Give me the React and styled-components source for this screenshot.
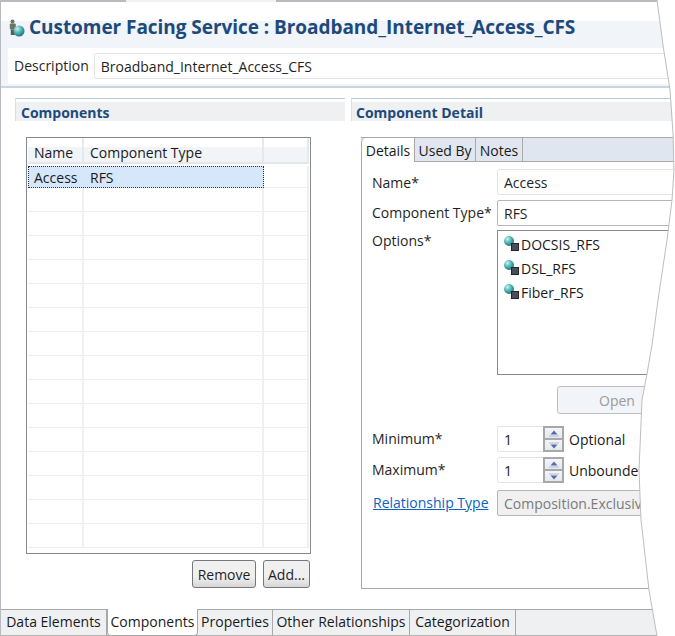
import React from "react";
import styled, { createGlobalStyle } from "styled-components";

const Global = createGlobalStyle`
  html, body { margin: 0; padding: 0; background: #fff; }
  body { font-family: "Open Sans", "Noto Sans", sans-serif; font-size: 14px; color: #1a1a1a; }
`;

const Page = styled.div`
  position: relative; width: 675px; height: 636px; overflow: hidden; background: #fff;
  box-sizing: border-box; border-left: 1px solid #b9b9c0; display: flex; flex-direction: column;
`;
const TopEdge = styled.div`
  height: 2px; flex: none;
  background: linear-gradient(to right, #b9b9c0 125px, #f2f2f4 125px, #f2f2f4 275px, #b9b9c0 275px);
`;
const TitleArea = styled.div`
  height: 46px; flex: none; box-sizing: border-box; padding-top: 11px; background: linear-gradient(#fff 19px, #f1f4f8 19px);
`;
const Title = styled.h1`
  margin: 0; height: 27px; display: flex; align-items: center; padding-left: 8px;
  font-size: 19px; font-weight: 700; color: #1c4a7c; white-space: nowrap; letter-spacing: -0.05px;
`;
const DescBand = styled.div`
  height: 40px; flex: none; box-sizing: border-box; padding-left: 7px; background: #f1f4f8; border-bottom: 2px solid #c9d5e2;
  display: flex;
`;
const DescRow = styled.div`
  flex: 1; height: 36px; background: #fff; display: flex; align-items: center; gap: 5px; padding-left: 6px;
`;
const Label = styled.span`
  white-space: nowrap; color: #1f1f1f; line-height: 20px;
`;
const Field = styled.div`
  box-sizing: border-box; height: ${p => p.$h || 26}px; flex: 1; display: flex; align-items: center; padding-left: 6px;
  border: 1px solid ${p => p.$strong ? "#b5b5b5" : "#e4e4e4"}; border-radius: 2px; background: ${p => p.$disabled ? "#f0f0f0" : "#fff"};
  color: ${p => p.$disabled ? "#7a7a7a" : "#1f1f1f"}; white-space: nowrap; overflow: hidden;
`;
const Panels = styled.div`
  flex: 1; display: flex; gap: 6px; padding: 10px 0 0 14px; min-height: 0;
`;
const LeftPanel = styled.section`
  width: 330px; flex: none; display: flex; flex-direction: column;
`;
const RightPanel = styled.section`
  flex: 1; min-width: 0; display: flex; flex-direction: column;
`;
const SectionHead = styled.h2`
  margin: 0; height: 23px; flex: none; box-sizing: border-box; padding: 4px 0 0 ${p => p.$pad}px; display: flex; align-items: center;
  border-top: 1px solid #bccde0; border-left: 1px solid #d6e0ea; font-size: 14px; font-weight: 700; color: #1c4a7c;
  background: linear-gradient(#fff 3px, #eff0f1 3px);
`;
const TableWrap = styled.div`
  margin: 16px 0 0 11px; width: 285px; height: 417px; flex: none; box-sizing: border-box;
  border: 1px solid #858a91; padding: 0 1px; display: flex; flex-direction: column; overflow: hidden;
`;
const TRow = styled.div`
  flex: none; height: ${p => p.$h || 24}px; box-sizing: border-box; display: grid; grid-template-columns: 56px 180px 1fr;
  border-bottom: 1px solid #efefef;
`;
const HeadRow = styled(TRow)`
  background: linear-gradient(#fff 9px, #f1f4f8 9px); border-bottom: 2px solid #e6e6e6;
`;
const Cell = styled.div`
  box-sizing: border-box; border-right: 2px solid #efefef; padding-left: ${p => p.$pad ?? 6}px; display: flex; align-items: center; line-height: 20px;
`;
const HeadCell = styled(Cell)`
  padding-top: 5px; border-right-color: #e8e8e8;
`;
const SelectedRow = styled(TRow)`
  grid-template-columns: 236px 1fr; margin-top: 2px; height: 22px; border-bottom: 1px solid #efefef;
`;
const SelectedCell = styled.div`
  box-sizing: border-box; display: grid; grid-template-columns: 56px 1fr; align-items: center;
  background: #d6e6fb; border: 1px dotted #333;
`;
const SelText = styled.span`
  padding: 1px 0 0 ${p => p.$pad}px;
`;
const Buttons = styled.div`
  display: flex; justify-content: flex-end; gap: 7px; width: 295px; margin-top: 6px;
`;
const Btn = styled.button`
  font: inherit; color: #1f1f1f; box-sizing: border-box; width: ${p => p.$w}px; height: 28px; padding: 0;
  border: 1px solid #74777c; border-radius: 3px; background: linear-gradient(#f0f0f0 60%, #d6d6d6);
`;
const Folder = styled.div`
  margin: 16px 0 0 10px; height: 452px; box-sizing: border-box; border-left: 1px solid #a9a9a9; border-bottom: 1px solid #a9a9a9;
  display: flex; flex-direction: column;
`;
const TabStrip = styled.div`
  height: 23px; flex: none; display: flex; background: #dfe6ef; border-top: 1px solid #a9a9a9; border-bottom: 1px solid #a9a9a9; margin-left: -1px;
`;
const FolderTab = styled.div`
  box-sizing: border-box; width: ${p => p.$w}px; height: ${p => p.$active ? 24 : 23}px; display: flex; align-items: center; justify-content: center;
  border-right: 1px solid #a9a9a9; z-index: 1; line-height: 20px; padding-top: 2px;
  ${p => p.$active && "background:#fff; border-left:1px solid #a9a9a9; border-top-left-radius:5px;"}
`;
const Form = styled.div`
  padding: 7px 0 0 10px; display: flex; flex-direction: column;
`;
const FormRow = styled.div`
  display: flex; align-items: ${p => p.$top ? "flex-start" : "center"}; margin-top: ${p => p.$mt || 0}px;
`;
const FormLabel = styled.span`
  width: 125px; flex: none; line-height: 20px; white-space: nowrap; color: #1f1f1f; padding-top: ${p => p.$nudge || 0}px;
`;
const LinkLabel = styled(FormLabel)`
  color: #0b63c5; text-decoration: underline; padding-left: 1px; width: 124px;
`;
const ListBox = styled.div`
  flex: 1; height: 145px; box-sizing: border-box; border: 1px solid #858a91; padding: 1px 0 0 5px; display: flex; flex-direction: column;
`;
const ListItem = styled.div`
  height: 24px; display: flex; align-items: center;
`;
const OpenRow = styled.div`
  padding-left: 185px; margin-top: 11px; margin-bottom: 12px;
`;
const OpenBtn = styled.div`
  width: 120px; height: 28px; box-sizing: border-box; border: 1px solid #bdbdbd; border-radius: 3px; background: #f1f4f8; color: #9a9a9a;
  display: flex; align-items: center; justify-content: center;
`;
const Spinner = styled.div`
  box-sizing: border-box; width: 67px; height: 26px; flex: none; border: 1px solid #e4e4e4; border-radius: 2px; display: flex; justify-content: space-between;
  padding-left: 6px; align-items: center;
`;
const SpinBtns = styled.div`
  width: 21px; height: 26px; margin: -1px -1px -1px 0; box-sizing: border-box; border: 2px solid #a8a8a8; display: flex; flex-direction: column; background: #a8a8a8; gap: 2px;
`;
const SpinBtn = styled.div`
  flex: 1; background: linear-gradient(#f3f5f9, #e4e8f0); display: flex; align-items: center; justify-content: center;
`;
const SpinNote = styled.span`
  margin-left: 5px; white-space: nowrap;
`;
const BottomTabs = styled.div`
  height: 27px; flex: none; display: flex; background: #eef0f2; box-sizing: border-box; border-top: 1px solid #a8a8a8; border-bottom: 1px solid #b5b5b5;
`;
const BottomTab = styled.div`
  box-sizing: border-box; width: ${p => p.$w}px; height: 25px; display: flex; align-items: center; justify-content: center; white-space: nowrap;
  border-right: 1px solid #a8a8a8; padding-bottom: 2px;
  ${p => p.$active && "background:#fff; margin-top:-1px; height:27px; border-left:1px solid #a8a8a8; border-bottom:1px solid #a8a8a8; border-bottom-left-radius:4px; border-bottom-right-radius:4px; z-index:1;"}
`;
const Torn = styled.svg`
  position: absolute; left: -1px; top: 0; width: 675px; height: 636px; pointer-events: none; z-index: 5;
`;

const Ball = ({ id }) => (
  <defs>
    <radialGradient id={id} cx="35%" cy="30%" r="75%">
      <stop offset="0" stopColor="#c8f0ee" />
      <stop offset="0.5" stopColor="#4fb5b8" />
      <stop offset="1" stopColor="#1d7078" />
    </radialGradient>
  </defs>
);

const OptionIcon = ({ id }) => (
  <svg width="18" height="16" viewBox="0 0 18 16" style={{ flex: "none" }}>
    <Ball id={id} />
    <circle cx="6" cy="5" r="5" fill={`url(#${id})`} />
    <rect x="8.5" y="7.5" width="7" height="7" fill="#4a4e5a" stroke="#23252c" strokeWidth="1" />
  </svg>
);

const TitleIcon = () => (
  <svg width="20" height="20" viewBox="0 0 20 20" style={{ flex: "none", marginTop: 3 }}>
    <Ball id="titleBall" />
    <circle cx="3.5" cy="3.5" r="2" fill="#6d7268" />
    <rect x="0.8" y="5.5" width="6" height="6" rx="1" fill="#6d7268" />
    <rect x="1.8" y="11.5" width="4" height="5.5" fill="#575b54" />
    <circle cx="10" cy="13" r="5.5" fill="url(#titleBall)" />
  </svg>
);

const Arrow = ({ up }) => (
  <svg width="12" height="7" viewBox="0 0 12 7">
    {up ? (
      <>
        <path d="M6 0.5 L9.5 4.5 H2.5 Z" fill="#5a6aa8" />
        <rect x="1" y="5.5" width="10" height="1" fill="#b4bdd6" />
      </>
    ) : (
      <>
        <rect x="1" y="0.5" width="10" height="1" fill="#b4bdd6" />
        <path d="M6 6.5 L9.5 2.5 H2.5 Z" fill="#5a6aa8" />
      </>
    )}
  </svg>
);

const Spin = () => (
  <SpinBtns>
    <SpinBtn><Arrow up /></SpinBtn>
    <SpinBtn><Arrow /></SpinBtn>
  </SpinBtns>
);

const emptyRows = Array.from({ length: 15 });
const edge = "M657 0 L663 45 L670 90 L673 133 L674 170 L672 200 L667 240 L658 300 L652 345 L647 374 L642 400 L639 470 L641 520 L649 590 L657 636";

export default function App() {
  return (
    <Page>
      <Global />
      <TopEdge />
      <TitleArea>
        <Title><TitleIcon />Customer Facing Service : Broadband_Internet_Access_CFS</Title>
      </TitleArea>
      <DescBand>
        <DescRow>
          <Label>Description</Label>
          <Field>Broadband_Internet_Access_CFS</Field>
        </DescRow>
      </DescBand>
      <Panels>
        <LeftPanel>
          <SectionHead $pad={5}>Components</SectionHead>
          <TableWrap>
            <HeadRow $h={26}>
              <HeadCell>Name</HeadCell>
              <HeadCell>Component Type</HeadCell>
              <HeadCell />
            </HeadRow>
            <SelectedRow>
              <SelectedCell>
                <SelText $pad={5}>Access</SelText>
                <SelText $pad={5}>RFS</SelText>
              </SelectedCell>
              <Cell />
            </SelectedRow>
            {emptyRows.map((_, i) => (
              <TRow key={i}><Cell /><Cell /><Cell /></TRow>
            ))}
          </TableWrap>
          <Buttons>
            <Btn $w={64}>Remove</Btn>
            <Btn $w={47}>Add...</Btn>
          </Buttons>
        </LeftPanel>
        <RightPanel>
          <SectionHead $pad={4}>Component Detail</SectionHead>
          <Folder>
            <TabStrip>
              <FolderTab $active $w={54}>Details</FolderTab>
              <FolderTab $w={61}>Used By</FolderTab>
              <FolderTab $w={47}>Notes</FolderTab>
            </TabStrip>
            <Form>
              <FormRow>
                <FormLabel $nudge={1}>Name*</FormLabel>
                <Field>Access</Field>
              </FormRow>
              <FormRow $mt={5}>
                <FormLabel>Component Type*</FormLabel>
                <Field $strong>RFS</Field>
              </FormRow>
              <FormRow $mt={4} $top>
                <FormLabel $nudge={1}>Options*</FormLabel>
                <ListBox>
                  <ListItem><OptionIcon id="b1" />DOCSIS_RFS</ListItem>
                  <ListItem><OptionIcon id="b2" />DSL_RFS</ListItem>
                  <ListItem><OptionIcon id="b3" />Fiber_RFS</ListItem>
                </ListBox>
              </FormRow>
              <OpenRow><OpenBtn>Open</OpenBtn></OpenRow>
              <FormRow>
                <FormLabel>Minimum*</FormLabel>
                <Spinner>1<Spin /></Spinner>
                <SpinNote>Optional</SpinNote>
              </FormRow>
              <FormRow $mt={5}>
                <FormLabel>Maximum*</FormLabel>
                <Spinner>1<Spin /></Spinner>
                <SpinNote>Unbounded</SpinNote>
              </FormRow>
              <FormRow $mt={7}>
                <LinkLabel>Relationship Type</LinkLabel>
                <Field $disabled $strong>Composition.Exclusive</Field>
              </FormRow>
            </Form>
          </Folder>
        </RightPanel>
      </Panels>
      <BottomTabs>
        <BottomTab $w={106}>Data Elements</BottomTab>
        <BottomTab $active $w={91}>Components</BottomTab>
        <BottomTab $w={75}>Properties</BottomTab>
        <BottomTab $w={137}>Other Relationships</BottomTab>
        <BottomTab $w={106}>Categorization</BottomTab>
      </BottomTabs>
      <Torn viewBox="0 0 675 636">
        <path d={`${edge} L675 636 L675 0 Z`} fill="#fff" />
        <path d={edge} fill="none" stroke="#bdbdbd" strokeWidth="1" />
      </Torn>
    </Page>
  );
}
